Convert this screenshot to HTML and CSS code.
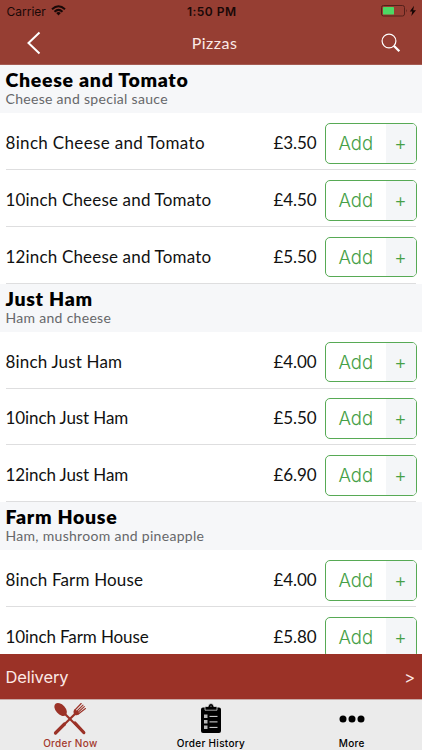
FILE: index.html
```html
<!DOCTYPE html>
<html lang="en">
<head>
<meta charset="utf-8">
<title>Pizzas</title>
<link rel="stylesheet" href="styles.css">
</head>
<body>
<div class="app">
  <header class="top">
    <div class="status">
      <div class="carrier"><span>Carrier</span>
        <svg width="15" height="11" viewBox="0 0 15 11"><g fill="none" stroke="#190807" stroke-width="2"><path d="M1 4.200Q7.500-1.800 14 4.200"/><path d="M3.500 6.700Q7.500 3 11.500 6.700"/></g><path d="M5.200 8.100Q7.500 6.100 9.800 8.100L7.500 10.600Z" fill="#190807"/></svg>
      </div>
      <b class="clock">1:50 PM</b>
      <svg class="battery" width="36" height="12" viewBox="0 0 36 12"><rect x=".5" y=".5" width="23" height="10.500" rx="2" fill="none" stroke="#54201a"/><rect x="2" y="2" width="11" height="7.500" rx=".6" fill="#4cd964"/><path d="M25 4q1.500 1.700 0 3.500z" fill="#54201a"/><path d="M33 .8L28.800 6.500h2.500L30.300 11L35 5.200h-2.800z" fill="#140504"/></svg>
    </div>
    <nav class="bar">
      <svg class="back" width="14" height="24" viewBox="0 0 14 24"><path d="M12.500 1.500L1.500 12L12.500 22.500" fill="none" stroke="#fff" stroke-width="2"/></svg>
      <h1>Pizzas</h1>
      <svg class="search" width="20" height="20" viewBox="0 0 20 20" fill="none" stroke="#fff"><circle cx="8" cy="8" r="6.900" stroke-width="1.200"/><path d="M12.800 12.800L18.300 18.300" stroke-width="2.300"/></svg>
    </nav>
  </header>
  <main class="menu">
    <section>
      <div class="head"><h2>Cheese and Tomato</h2><p>Cheese and special sauce</p></div>
      <div class="row"><span class="name wide">8inch Cheese and Tomato</span><span class="price">£3.50</span><button><span>Add</span><i>+</i></button></div>
      <div class="row"><span class="name">10inch Cheese and Tomato</span><span class="price">£4.50</span><button><span>Add</span><i>+</i></button></div>
      <div class="row"><span class="name">12inch Cheese and Tomato</span><span class="price">£5.50</span><button><span>Add</span><i>+</i></button></div>
    </section>
    <section>
      <div class="head"><h2>Just Ham</h2><p>Ham and cheese</p></div>
      <div class="row"><span class="name">8inch Just Ham</span><span class="price">£4.00</span><button><span>Add</span><i>+</i></button></div>
      <div class="row"><span class="name tight">10inch Just Ham</span><span class="price">£5.50</span><button><span>Add</span><i>+</i></button></div>
      <div class="row"><span class="name tight">12inch Just Ham</span><span class="price">£6.90</span><button><span>Add</span><i>+</i></button></div>
    </section>
    <section>
      <div class="head"><h2>Farm House</h2><p>Ham, mushroom and pineapple</p></div>
      <div class="row"><span class="name">8inch Farm House</span><span class="price">£4.00</span><button><span>Add</span><i>+</i></button></div>
      <div class="row"><span class="name tight">10inch Farm House</span><span class="price">£5.80</span><button><span>Add</span><i>+</i></button></div>
    </section>
  </main>
  <div class="delivery"><span>Delivery</span><span class="go">&gt;</span></div>
  <footer class="tabs">
    <div class="tab active">
      <svg width="34" height="34" viewBox="0 0 34 34"><path d="M10 10L31 31" stroke="#9b3227" stroke-width="2.200" stroke-linecap="round"/><path d="M22 21L30.800 30.500" stroke="#9b3227" stroke-width="3.200" stroke-linecap="round"/><ellipse cx="7.600" cy="7.400" rx="4.800" ry="7.600" transform="rotate(-42 7.600 7.400)" fill="#9b3227"/><path d="M2.500 31L24 10" stroke="#9b3227" stroke-width="2.200" stroke-linecap="round"/><path d="M2.500 31L11.500 22" stroke="#9b3227" stroke-width="3.200" stroke-linecap="round"/><path d="M20.500 9L22 7L26.500 11.500L24.500 13Q20.500 14.500 20.500 9Z" fill="#9b3227"/><path d="M21.500 8.500L28.200 1.500M23 10L30 3.200M24.300 11L31.300 4.700M25 12.300L32.500 6.500" stroke="#9b3227" stroke-width="1.100" stroke-linecap="round"/></svg>
      <span>Order Now</span>
    </div>
    <div class="tab">
      <svg width="20" height="31" viewBox="0 0 20 31"><path d="M2 4.500H18a2 2 0 0 1 2 2V28a2 2 0 0 1-2 2H2a2 2 0 0 1-2-2V6.500a2 2 0 0 1 2-2Z"/><path d="M4 7.200V4.500Q4 3.500 5 3.500H7.200Q7.500 .5 10 .5T12.800 3.500H15Q16 3.500 16 4.500V7.200Z" stroke="#ebebeb" stroke-width=".7"/><circle cx="10" cy="3.200" r=".7" fill="#888"/><path d="M3 11.500h3.500v3.500H3zM3 17h3.500v3.500H3zM3 22.500h3.500v3.500H3z" fill="#b8b8b8"/><path d="M8.500 13.400h8M8.500 18.900h8M8.500 24.400h8" stroke="#ddd"/></svg>
      <span>Order History</span>
    </div>
    <div class="tab">
      <svg width="26" height="8" viewBox="0 0 26 8"><circle cx="4" cy="4" r="3.500"/><circle cx="13" cy="4" r="3.500"/><circle cx="22" cy="4" r="3.500"/></svg>
      <span>More</span>
    </div>
  </footer>
</div>
</body>
</html>
```
FILE: styles.css
```css
* { box-sizing: border-box; }
body { margin: 0; background: #fff; color: #111; font-family: Lato, sans-serif; }
svg { display: block; flex: none; }
h1, h2, p { margin: 0; }
.app { width: 422px; height: 750px; display: flex; flex-direction: column; overflow: hidden; }
.top { height: 65.3px; flex: none; background: #963e33; border-bottom: 1px solid #a55b52; }
.status { height: 22px; display: grid; grid-template-columns: 1fr auto 1fr; align-items: center; padding: 0 5px 0 6.500px; font-family: Inter, sans-serif; color: #190807; }
.status svg { margin-bottom: 1px; }
.carrier { display: flex; align-items: center; gap: 5px; font-size: 12px; }
.clock { font-size: 12px; font-weight: 600; letter-spacing: .5px; }
.battery { justify-self: end; }
.bar { height: 42px; display: grid; grid-template-columns: 1fr auto 1fr; align-items: center; padding: 0 21px 0 27px; }
.bar svg { margin-bottom: 1px; }
h1 { color: #fbe9e6; font-size: 16px; line-height: 16px; font-weight: 400; letter-spacing: .5px; padding: 0 0 1px 1px; }
.search { justify-self: end; }
.menu { flex: 1; min-height: 0; overflow: hidden; }
.head { height: 48.100px; background: #f6f7f9; padding: 4px 5.500px 0; }
h2 { color: #000; font-size: 19.500px; line-height: 22px; font-weight: 800; letter-spacing: .7px; }
p { color: #66676a; font-size: 14px; line-height: 16px; letter-spacing: .3px; }
.row { height: 56.800px; margin: 0 6px 0 5.500px; display: flex; align-items: flex-start; padding-top: 9.800px; border-bottom: 1px solid #dededf; }
.name, .price { line-height: 40.700px; font-size: 17px; letter-spacing: .17px; white-space: nowrap; }
.name { flex: 1; }
.wide { letter-spacing: .33px; }
.tight { letter-spacing: -.1px; }
.price { margin-right: 8.500px; letter-spacing: -.1px; }
button { width: 91.500px; height: 40.700px; margin-right: -.5px; display: flex; align-items: stretch; padding: 0; border: 1px solid #57aa55; border-radius: 5px; overflow: hidden; background: #fff; color: #46a047; }
button span { flex: 1; font: 300 18.500px/39px Inter, sans-serif; }
button i { width: 30px; background: #f4f6f8; font: 300 19px/39px Inter, sans-serif; }
.delivery { height: 45px; flex: none; background: #9b3227; color: #fbe9e6; display: flex; align-items: center; justify-content: space-between; padding: 0 7px 0 5.500px; font: 16.500px Inter, sans-serif; letter-spacing: -.1px; }
.tabs { height: 51px; flex: none; background: #ebebeb; border-top: 1px solid #c9aaa6; display: grid; grid-template-columns: repeat(3, 1fr); }
.tab { display: grid; grid-template-rows: 37px 13px; place-items: center; color: #000; font: 500 10px/13px Inter, sans-serif; letter-spacing: .3px; }
.active { color: #a3382d; }
```
